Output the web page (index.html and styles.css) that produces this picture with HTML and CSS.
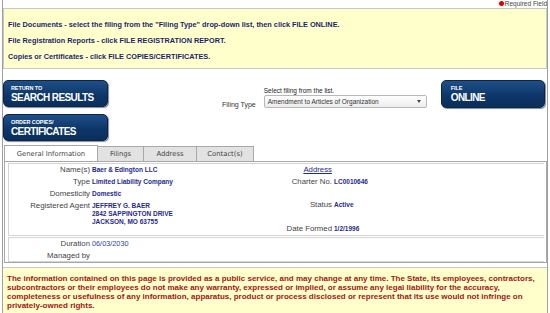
FILE: index.html
```html
<!DOCTYPE html>
<html lang="en">
<head>
    <meta charset="UTF-8">
    <title>Business Entity Details</title>
    <link rel="stylesheet" href="styles.css">
</head>
<body>
<div class="page">
    <div class="required"><span class="dot"></span>Required Field</div>

    <!-- instructions -->
    <div class="notice">
        <p>File Documents - select the filing from the "Filing Type" drop-down list, then click FILE ONLINE.</p>
        <p>File Registration Reports - click FILE REGISTRATION REPORT.</p>
        <p>Copies or Certificates - click FILE COPIES/CERTIFICATES.</p>
    </div>

    <!-- actions -->
    <div class="actions">
        <div class="left-buttons">
            <a class="big-btn" href="#"><small>RETURN TO</small>SEARCH RESULTS</a>
            <a class="big-btn" href="#"><small>ORDER COPIES/</small>CERTIFICATES</a>
        </div>
        <div class="filing">
            <label class="filing-label">Filing Type</label>
            <div class="filing-select">
                <div class="hint">Select filing from the list.</div>
                <div class="select">Amendment to Articles of Organization<span class="arrow"></span></div>
            </div>
        </div>
        <a class="big-btn online" href="#"><small>FILE</small>ONLINE</a>
    </div>

    <!-- tabs -->
    <div class="tabs">
        <div class="tab active">General Information</div>
        <div class="tab">Filings</div>
        <div class="tab">Address</div>
        <div class="tab">Contact(s)</div>
    </div>

    <div class="panel">
        <div class="box main-box">
            <div class="col">
                <div class="row"><span class="lbl">Name(s)</span><span class="val">Baer &amp; Edington LLC</span></div>
                <div class="row"><span class="lbl">Type</span><span class="val">Limited Liability Company</span></div>
                <div class="row"><span class="lbl">Domesticity</span><span class="val">Domestic</span></div>
                <div class="row"><span class="lbl">Registered Agent</span><span class="val">JEFFREY G. BAER<br>2842 SAPPINGTON DRIVE<br>JACKSON, MO 63755</span></div>
            </div>
            <div class="col right">
                <div class="row"><a class="lbl addr" href="#">Address</a></div>
                <div class="row"><span class="lbl">Charter No.</span><span class="val">LC0010646</span></div>
                <div class="row status"><span class="lbl">Status</span><span class="val">Active</span></div>
                <div class="row formed"><span class="lbl">Date Formed</span><span class="val">1/2/1996</span></div>
            </div>
        </div>
        <div class="box small-box">
            <div class="row"><span class="lbl">Duration</span><span class="val plain">06/03/2030</span></div>
            <div class="row"><span class="lbl">Managed by</span><span class="val"></span></div>
        </div>
    </div>

    <div class="disclaimer">
        The information contained on this page is provided as a public service, and may change at any time. The State, its employees, contractors, subcontractors or their employees do not make any warranty, expressed or implied, or assume any legal liability for the accuracy, completeness or usefulness of any information, apparatus, product or process disclosed or represent that its use would not infringe on privately-owned rights.
    </div>
</div>
</body>
</html>
```

FILE: styles.css
```css
body {
    margin: 0;
    font-family: "Liberation Sans", Arial, sans-serif;
    background: #fff;
}
.page {
    margin-left: 2px;
    width: 544px;
    border-left: 1px solid #a0a0a0;
    border-right: 1px solid #a0a0a0;
    height: 313px;
    overflow: hidden;
}
.required {
    text-align: right;
    font-size: 6.5px;
    color: #444;
    height: 8px;
    line-height: 7px;
}
.dot {
    display: inline-block;
    width: 5px;
    height: 5px;
    border-radius: 50%;
    background: #e00000;
    margin-right: 1px;
}
.notice {
    background: #ffffcc;
    border: 1px solid #c8c8c8;
    padding: 12px 0 0 4px;
    box-sizing: border-box;
    height: 61px;
}
.notice p {
    margin: 0 0 8px;
    font-size: 7.3px;
    font-weight: bold;
    color: #1a1f6e;
    line-height: 8px;
}
.actions {
    display: flex;
    align-items: flex-start;
    padding-top: 11px;
    height: 76px;
    box-sizing: border-box;
}
.left-buttons {
    display: flex;
    flex-direction: column;
    gap: 7px;
}
.big-btn {
    display: block;
    width: 105px;
    height: 27px;
    box-sizing: border-box;
    padding: 4px 0 0 7px;
    border-radius: 5px;
    background: linear-gradient(#1f4f88, #0c3567 60%, #0a2f5c);
    border: 1px solid #0a2547;
    box-shadow: 1px 1px 1px #8a8a8a;
    color: #fff;
    text-decoration: none;
    font-weight: bold;
    font-size: 10px;
    line-height: 11px;
    letter-spacing: -0.6px;
}
.big-btn small {
    display: block;
    font-size: 5.5px;
    line-height: 7px;
    letter-spacing: -0.1px;
}
.big-btn.online {
    width: 104px;
    margin-left: 14px;
    padding-left: 9px;
    height: 28px;
}
.filing {
    display: flex;
    align-items: flex-end;
    margin-left: 114px;
    gap: 8px;
    padding-top: 7px;
}
.filing-label {
    font-size: 7px;
    color: #333;
}
.hint {
    font-size: 6.5px;
    color: #222;
    margin-bottom: 1px;
}
.select {
    position: relative;
    width: 163px;
    height: 13px;
    box-sizing: border-box;
    border: 1px solid #b8b8b8;
    border-radius: 2px;
    background: linear-gradient(#ffffff, #ececec);
    font-size: 6.5px;
    color: #333;
    padding: 2px 0 0 3px;
}
.arrow {
    position: absolute;
    right: 5px;
    top: 4px;
    border-left: 2.5px solid transparent;
    border-right: 2.5px solid transparent;
    border-top: 3px solid #444;
}
.tabs {
    display: flex;
    padding-left: 1px;
    height: 16px;
}
.tab {
    box-sizing: border-box;
    font-family: "DejaVu Sans", Verdana, sans-serif;
    font-size: 6.8px;
    color: #444;
    text-align: center;
    border: 1px solid #a8a8a8;
    border-bottom: none;
    background: #e2e2e2;
    line-height: 15px;
    height: 15px;
    margin-top: 1px;
    margin-left: -1px;
}
.tab:nth-child(1) { width: 94px; }
.tab:nth-child(2) { width: 47px; }
.tab:nth-child(3) { width: 54px; }
.tab:nth-child(4) { width: 58px; }
.tab.active {
    background: #fff;
    height: 16px;
    margin-top: 0;
    line-height: 16px;
    position: relative;
    z-index: 1;
    margin-left: 0;
}
.panel {
    border: 1px solid #a8a8a8;
    margin: 0 0 0 1px;
    padding: 1px 2px 2px 3px;
    height: 102px;
    box-sizing: border-box;
}
.box {
    border: 1px solid #d4d4d4;
    border-right: none;
}
.main-box {
    display: flex;
    height: 73px;
    box-sizing: border-box;
    padding-top: 2px;
}
.small-box {
    margin-top: 1px;
    height: 25px;
    box-sizing: border-box;
    padding-top: 2px;
}
.col {
    width: 269px;
}
.col.right {
    width: 240px;
}
.row {
    display: flex;
    font-size: 6.5px;
    line-height: 8px;
    margin-bottom: 4px;
}
.lbl {
    width: 81px;
    text-align: right;
    color: #444;
    font-size: 7.8px;
    padding-right: 2px;
    white-space: nowrap;
}
.col.right .lbl {
    width: 54px;
}
.val {
    color: #1f2a8a;
    font-weight: bold;
}
.val.plain {
    font-weight: normal;
    color: #2f3fa0;
    font-size: 7.3px;
}
.lbl.addr {
    color: #1f2a8a;
    text-decoration: underline;
    display: block;
}
.row.status {
    margin-top: 15px;
}
.row.formed {
    margin-top: 16px;
}
.disclaimer {
    background: #ffffcc;
    border-top: 1px solid #c8c8c8;
    margin-top: 4px;
    padding: 6px 4px 0 4px;
    height: 47px;
    font-size: 8px;
    line-height: 9px;
    font-weight: bold;
    color: #a31515;
}
```
